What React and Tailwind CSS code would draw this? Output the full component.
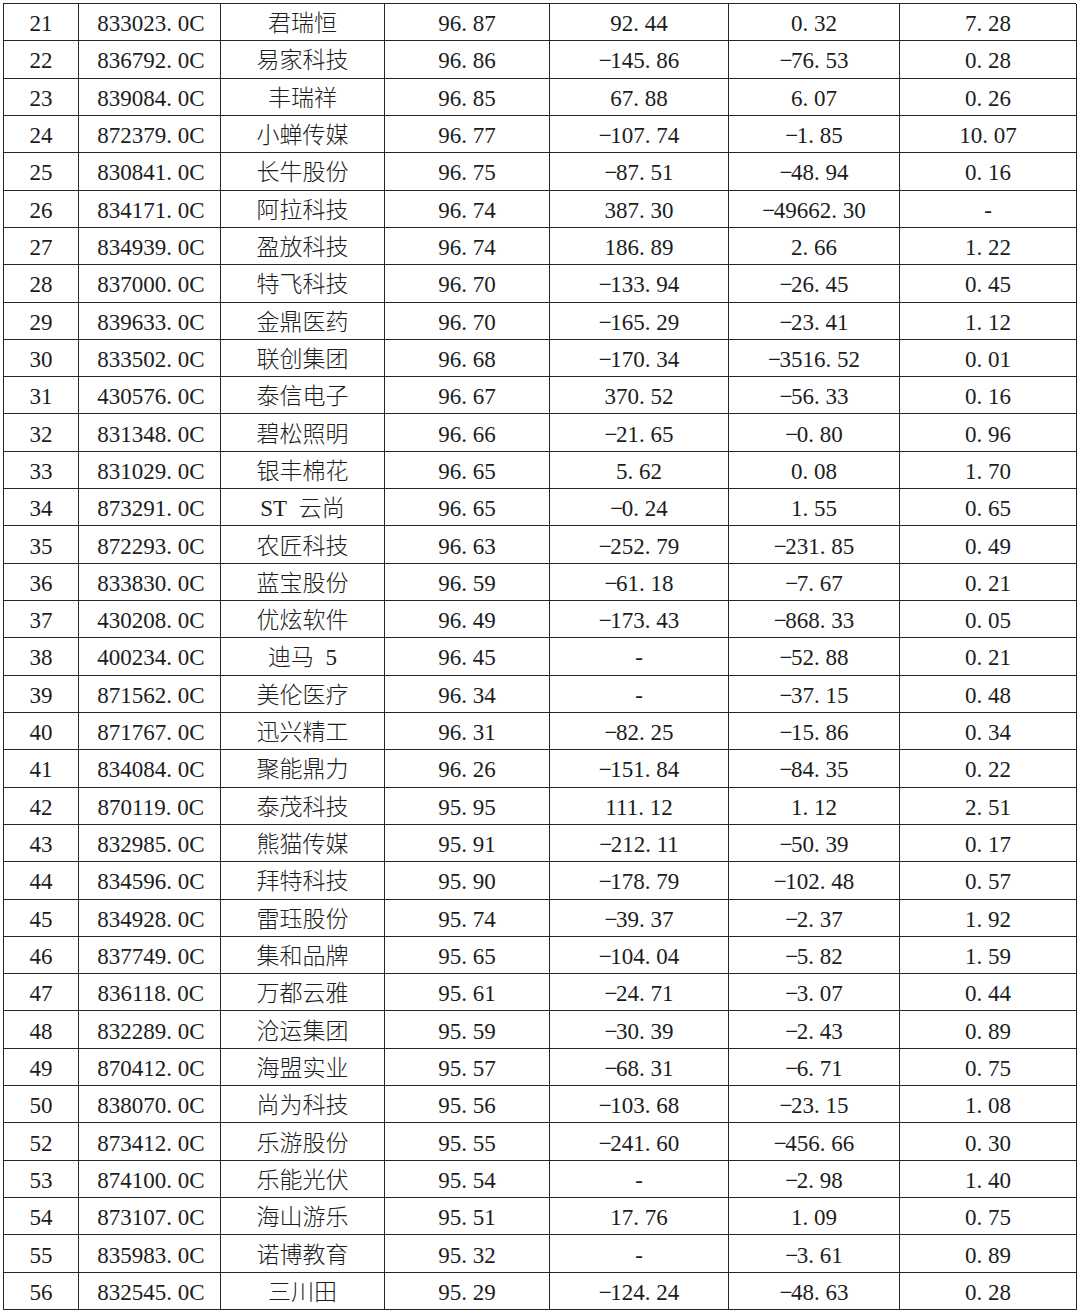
import React from "react";

const rows = [
  ["21","833023.0C","君瑞恒","96.87","92.44","0.32","7.28"],
  ["22","836792.0C","易家科技","96.86","-145.86","-76.53","0.28"],
  ["23","839084.0C","丰瑞祥","96.85","67.88","6.07","0.26"],
  ["24","872379.0C","小蝉传媒","96.77","-107.74","-1.85","10.07"],
  ["25","830841.0C","长牛股份","96.75","-87.51","-48.94","0.16"],
  ["26","834171.0C","阿拉科技","96.74","387.30","-49662.30","-"],
  ["27","834939.0C","盈放科技","96.74","186.89","2.66","1.22"],
  ["28","837000.0C","特飞科技","96.70","-133.94","-26.45","0.45"],
  ["29","839633.0C","金鼎医药","96.70","-165.29","-23.41","1.12"],
  ["30","833502.0C","联创集团","96.68","-170.34","-3516.52","0.01"],
  ["31","430576.0C","泰信电子","96.67","370.52","-56.33","0.16"],
  ["32","831348.0C","碧松照明","96.66","-21.65","-0.80","0.96"],
  ["33","831029.0C","银丰棉花","96.65","5.62","0.08","1.70"],
  ["34","873291.0C","ST 云尚","96.65","-0.24","1.55","0.65"],
  ["35","872293.0C","农匠科技","96.63","-252.79","-231.85","0.49"],
  ["36","833830.0C","蓝宝股份","96.59","-61.18","-7.67","0.21"],
  ["37","430208.0C","优炫软件","96.49","-173.43","-868.33","0.05"],
  ["38","400234.0C","迪马 5","96.45","-","-52.88","0.21"],
  ["39","871562.0C","美伦医疗","96.34","-","-37.15","0.48"],
  ["40","871767.0C","迅兴精工","96.31","-82.25","-15.86","0.34"],
  ["41","834084.0C","聚能鼎力","96.26","-151.84","-84.35","0.22"],
  ["42","870119.0C","泰茂科技","95.95","111.12","1.12","2.51"],
  ["43","832985.0C","熊猫传媒","95.91","-212.11","-50.39","0.17"],
  ["44","834596.0C","拜特科技","95.90","-178.79","-102.48","0.57"],
  ["45","834928.0C","雷珏股份","95.74","-39.37","-2.37","1.92"],
  ["46","837749.0C","集和品牌","95.65","-104.04","-5.82","1.59"],
  ["47","836118.0C","万都云雅","95.61","-24.71","-3.07","0.44"],
  ["48","832289.0C","沧运集团","95.59","-30.39","-2.43","0.89"],
  ["49","870412.0C","海盟实业","95.57","-68.31","-6.71","0.75"],
  ["50","838070.0C","尚为科技","95.56","-103.68","-23.15","1.08"],
  ["52","873412.0C","乐游股份","95.55","-241.60","-456.66","0.30"],
  ["53","874100.0C","乐能光伏","95.54","-","-2.98","1.40"],
  ["54","873107.0C","海山游乐","95.51","17.76","1.09","0.75"],
  ["55","835983.0C","诺博教育","95.32","-","-3.61","0.89"],
  ["56","832545.0C","三川田","95.29","-124.24","-48.63","0.28"],
];

function Num({ v }) {
  if (v === "-") return <span>-</span>;
  return (
    <span className="whitespace-nowrap">
      {v.split("").map((c, i) => {
        if (c === ".") return <span key={i} className="inline-block w-[0.5em] text-left">.</span>;
        if (c === "-") return <span key={i} className="inline-block w-[0.5em] text-center">−</span>;
        if (c === "C") return <span key={i} className="inline-block w-[0.55em] text-left">C</span>;
        return <span key={i}>{c}</span>;
      })}
    </span>
  );
}

function Name({ v }) {
  const parts = v.split(" ");
  if (parts.length === 1) return <span className="whitespace-nowrap font-light">{v}</span>;
  return (
    <span className="whitespace-nowrap">
      {parts[0].match(/^[A-Za-z0-9]+$/) ? <span>{parts[0]}</span> : <span className="font-light">{parts[0]}</span>}
      <span className="inline-block w-[0.5em]"></span>
      {parts[1].match(/^[A-Za-z0-9]+$/) ? <span>{parts[1]}</span> : <span className="font-light">{parts[1]}</span>}
    </span>
  );
}

export default function App() {
  return (
    <div className="w-[1080px] h-[1315px] bg-white pt-[3px] pl-[3px]">
      <div
        className="grid grid-cols-[75px_142px_164px_165px_179px_171px_177px] grid-rows-[repeat(35,minmax(0,1fr))] h-[1307px] w-[1073px] border-t border-l border-[#262626] text-[#1c1c1c] text-[23px] leading-none"
        style={{ fontFamily: '"Liberation Serif", "Noto Sans CJK SC", serif' }}
      >
        {rows.map((r, ri) =>
          r.map((c, ci) => (
            <div
              key={ri + "-" + ci}
              className="flex items-center justify-center pt-[3px] border-r border-b border-[#262626]"
            >
              {ci === 2 ? <Name v={c} /> : <Num v={c} />}
            </div>
          ))
        )}
      </div>
    </div>
  );
}
